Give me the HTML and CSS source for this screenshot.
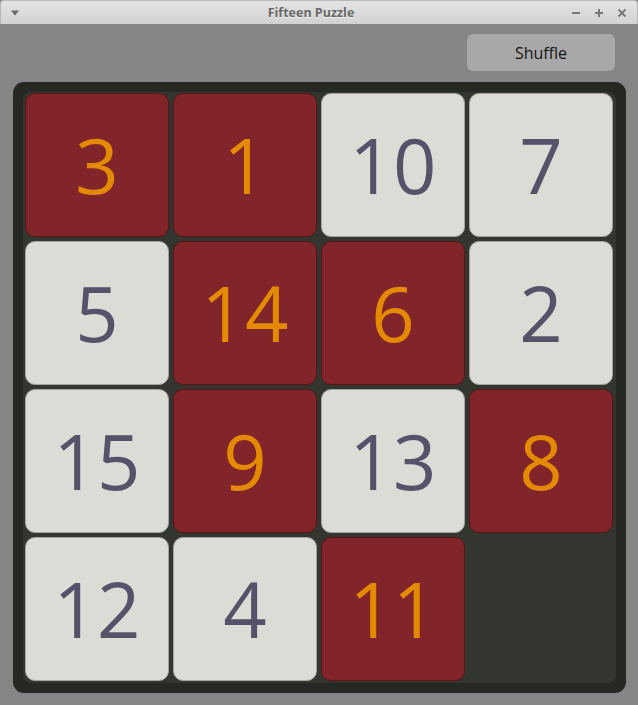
FILE: index.html
```html
<!DOCTYPE html>
<html>
<head>
<meta charset="utf-8">
<link rel="stylesheet" href="styles.css">
</head>
<body>
<div class="window">
  <div class="titlebar">
    <svg class="menu-btn" width="10" height="6" viewBox="0 0 10 6"><path d="M1 0.5 L9 0.5 L5 5.5 Z" fill="#666"/></svg>
    <div class="title">Fifteen Puzzle</div>
    <div class="controls">
      <svg width="10" height="10" viewBox="0 0 10 10"><path d="M1 5 H9" stroke="#777" stroke-width="2"/></svg>
      <svg width="10" height="10" viewBox="0 0 10 10"><path d="M1 5 H9 M5 1 V9" stroke="#777" stroke-width="2"/></svg>
      <svg width="10" height="10" viewBox="0 0 10 10"><path d="M1.5 1.5 L8.5 8.5 M8.5 1.5 L1.5 8.5" stroke="#777" stroke-width="1.8"/></svg>
    </div>
  </div>
  <div class="content">
    <div class="toolbar"><button class="shuffle">Shuffle</button></div>
    <div class="board">
      <div class="grid">
        <div class="tile red">3</div>
        <div class="tile red">1</div>
        <div class="tile light">10</div>
        <div class="tile light">7</div>
        <div class="tile light">5</div>
        <div class="tile red">14</div>
        <div class="tile red">6</div>
        <div class="tile light">2</div>
        <div class="tile light">15</div>
        <div class="tile red">9</div>
        <div class="tile light">13</div>
        <div class="tile red">8</div>
        <div class="tile light">12</div>
        <div class="tile light">4</div>
        <div class="tile red">11</div>
        <div class="empty"></div>
      </div>
    </div>
  </div>
</div>
</body>
</html>
```

FILE: styles.css
```css
html, body {
  margin: 0;
  padding: 0;
}
body {
  width: 638px;
  height: 705px;
  overflow: hidden;
  background: #848484;
  font-family: "Open Sans", "Noto Sans", sans-serif;
}
.window {
  width: 638px;
  height: 705px;
  display: flex;
  flex-direction: column;
  background: #858585;
}
.titlebar {
  height: 24px;
  flex: none;
  box-sizing: border-box;
  border: 1px solid #b8b8b8;
  border-bottom: none;
  border-radius: 4px 4px 0 0;
  background: linear-gradient(#e4e4e4, #d2d2d2);
  display: flex;
  align-items: center;
  position: relative;
}
.menu-btn {
  margin-left: 9px;
}
.title {
  position: absolute;
  left: 0;
  right: 16px;
  top: 3px;
  text-align: center;
  font-family: "Open Sans", sans-serif;
  font-weight: 700;
  font-size: 12.5px;
  color: #686868;
  text-shadow: 0 1px 0 #f4f4f4;
}
.controls {
  margin-left: auto;
  margin-right: 10px;
  display: flex;
  gap: 13px;
  align-items: center;
}
.controls svg {
  display: block;
}
.content {
  flex: 1;
  display: flex;
  flex-direction: column;
  padding: 10px 12px 0 13px;
}
.toolbar {
  display: flex;
  justify-content: flex-end;
  padding-right: 11px;
}
.shuffle {
  width: 148px;
  height: 37px;
  border: none;
  border-radius: 6px;
  background: #a8a8a8;
  font-family: "Open Sans", sans-serif;
  font-size: 16px;
  color: #141414;
  padding: 0;
}
.board {
  margin-top: 11px;
  width: 613px;
  height: 611px;
  box-sizing: border-box;
  background: #262823;
  border-radius: 11px;
  padding: 10px;
}
.grid {
  width: 100%;
  height: 100%;
  box-sizing: border-box;
  background: #33352f;
  border-radius: 8px;
  padding: 1px 2px;
  display: grid;
  grid-template-columns: repeat(4, 144px);
  grid-template-rows: repeat(4, 144px);
  gap: 4px;
}
.tile {
  box-sizing: border-box;
  border-radius: 10px;
  display: flex;
  align-items: center;
  justify-content: center;
  font-size: 76px;
  font-weight: 400;
  line-height: 1;
}
.red {
  background: #82252a;
  border: 1px solid #5b1518;
  color: #e48a00;
}
.light {
  background: #dcdcd6;
  border: 1px solid #a4a49c;
  color: #54536a;
}
```
